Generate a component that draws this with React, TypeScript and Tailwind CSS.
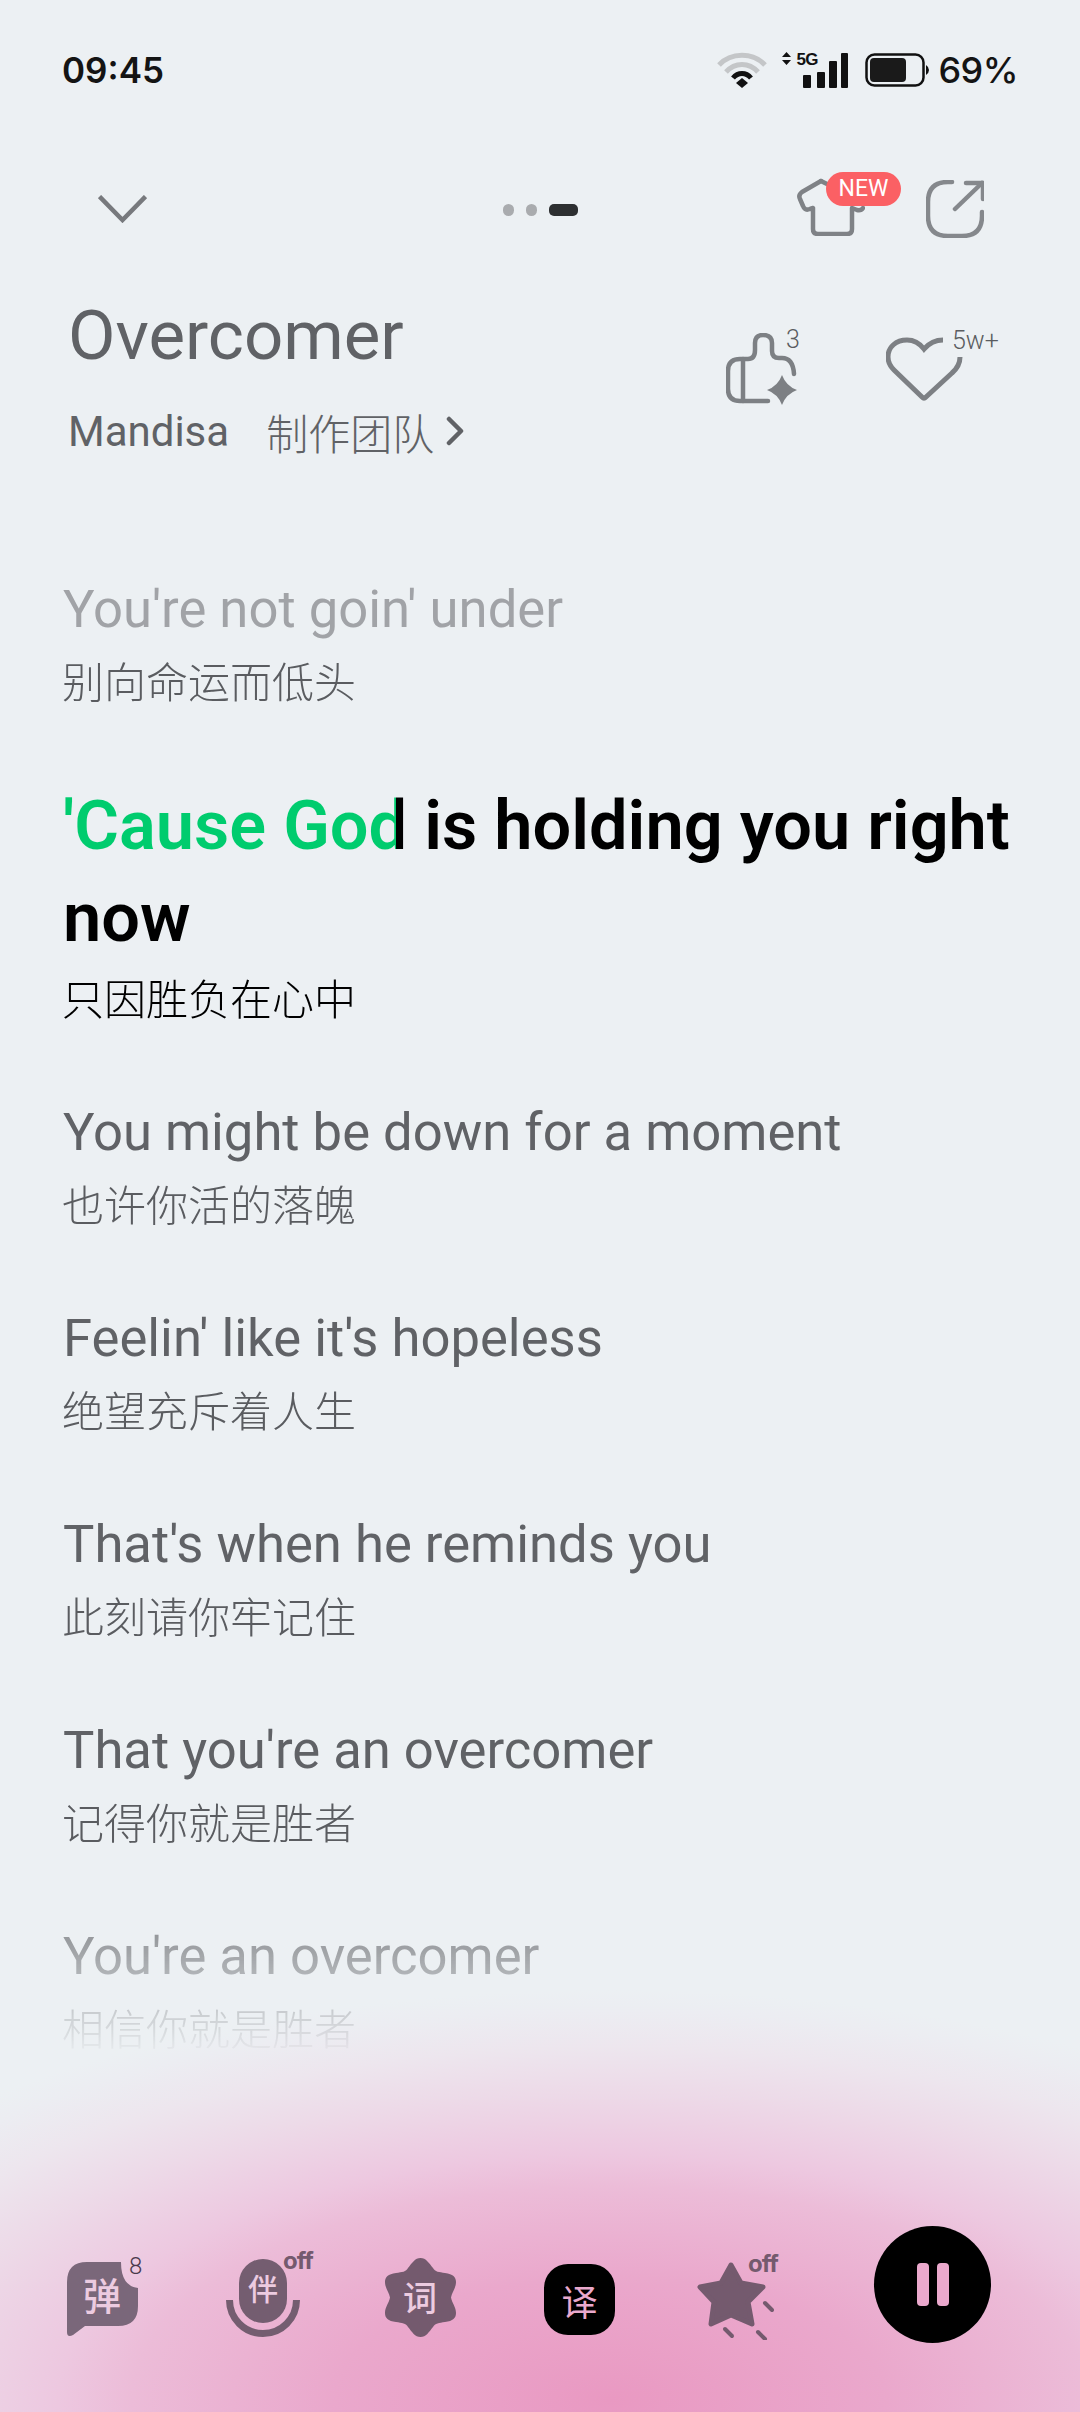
const lyrics = [
  { en: "You might be down for a moment", zh: "也许你活的落魄" },
  { en: "Feelin' like it's hopeless", zh: "绝望充斥着人生" },
  { en: "That's when he reminds you", zh: "此刻请你牢记住" },
  { en: "That you're an overcomer", zh: "记得你就是胜者" },
  { en: "You're an overcomer", zh: "相信你就是胜者" },
];

const zhFont = "font-['Noto_Sans_CJK_SC',sans-serif]";

const StatusIcons = () => (
  <div className="flex items-center">
    <svg width="50" height="36" viewBox="0 0 50 36" fill="none" strokeLinecap="butt">
      <path d="M2 13 C14 0 36 0 48 13" stroke="#c4c6c8" strokeWidth="5" />
      <path d="M9 20 C18 10 32 10 41 20" stroke="#c4c6c8" strokeWidth="5" />
      <path d="M16 26 C21 20 29 20 34 26" stroke="#111" strokeWidth="5" />
      <path d="M25 26 L31 31 L25 36 L19 31 Z" fill="#111" />
    </svg>
    <div className="relative ml-[15px] h-[36px] w-[67px]">
      <svg width="67" height="36" viewBox="0 0 67 36">
        <path d="M4.500 0 L9 5 H0 Z M4.500 13 L9 8 H0 Z" fill="#111" />
        <rect x="21" y="23" width="8" height="13" rx="1" fill="#111" />
        <rect x="35" y="20" width="8" height="16" rx="1" fill="#111" />
        <rect x="47" y="9" width="8" height="27" rx="1" fill="#111" />
        <rect x="59" y="1" width="7" height="35" rx="1" fill="#111" />
      </svg>
      <span className="absolute top-[-1px] left-[14px] font-['Liberation_Sans',sans-serif] text-[17px] leading-[17px] font-bold tracking-[-0.5px] text-[#111]">5G</span>
    </div>
    <svg className="ml-[16px]" width="64" height="34" viewBox="0 0 64 34">
      <rect x="1.500" y="1.500" width="57" height="31" rx="8" fill="none" stroke="#111" strokeWidth="2.500" />
      <rect x="5" y="5" width="36" height="24" rx="4" fill="#1a1a1a" />
      <path d="M61 12 Q64 14 64 17 Q64 20 61 22 Z" fill="#111" />
    </svg>
    <span className="ml-[9px] font-['Inter',sans-serif] text-[36px] leading-[36px] font-medium tracking-[-0.5px] text-[#141414]">69%</span>
  </div>
);

const ShirtIcon = () => (
  <svg width="68" height="58" viewBox="0 0 68 58" fill="none" stroke="#7f8286" strokeWidth="4.500" strokeLinejoin="round" strokeLinecap="round">
    <path d="M24 3 L5 14 Q1 17 3 21 L6 28 Q8 33 13 31 L16 30 V51 Q16 56 21 56 H50 Q55 56 55 51 V30 L60 32 Q64 33 66 30" />
    <path d="M24 3 L30 6" />
  </svg>
);

const ShareIcon = () => (
  <svg width="58" height="58" viewBox="0 0 58 58" fill="none" stroke="#85888c" strokeWidth="4.500" strokeLinecap="round">
    <path d="M26 2 H22 Q2 2 2 22 V36 Q2 56 22 56 H36 Q56 56 56 36 V32" />
    <path d="M29 29 L56 3" />
    <path d="M40 3 H57 V19" />
  </svg>
);

const ThumbIcon = () => (
  <svg width="72" height="72" viewBox="0 0 72 72" fill="none" stroke="#7d8084" strokeWidth="4.500" strokeLinecap="round">
    <path d="M42 68 H14 Q2 68 2 56 V38 Q2 26 14 26 H22 Q29 26 29 17 V10 Q29 2 37 2 Q46 2 46 10 V18 Q46 25 53 25 H56 Q67 25 68 41" />
    <path d="M17 26 V68" />
    <path d="M56 42 Q60 53 71 57 Q60 61 56 72 Q52 61 41 57 Q52 53 56 42 Z" fill="#7d8084" stroke="none" />
  </svg>
);

const HeartIcon = () => (
  <svg width="78" height="66" viewBox="0 0 78 66" fill="none" stroke="#7d8084" strokeWidth="5" strokeLinecap="butt">
    <path d="M57 3 Q46 3 38 12 Q31 3 21 3 C10 3 2 10 2 20 C2 26 5 30 8 33 L36 60 Q38 62 40 60 L66 36 Q74 29 74 20" />
  </svg>
);

const Glyph = ({ children, className }: { children: string; className: string }) => (
  <span className={`absolute flex items-center justify-center font-medium ${zhFont} ${className}`}>{children}</span>
);

const OffTag = ({ className }: { className: string }) => (
  <span className={`absolute font-['Inter',sans-serif] text-[24px] leading-[20px] font-bold tracking-[-1px] text-[#745a6e] ${className}`}>off</span>
);

const Toolbar = () => (
  <div className="flex h-[186px] items-start pl-[67px]">
    <div className="relative mt-[36px] h-[75px] w-[71px]">
      <svg width="71" height="75" viewBox="0 0 71 75">
        <path d="M0 20 Q0 0 20 0 H54 Q54 24 71 26 V44 Q71 64 51 64 H18 L6 73 Q0 76 0 70 Z" fill="#7a677a" />
      </svg>
      <Glyph className="top-[11px] left-[15px] h-[40px] w-[40px] text-[38px] text-[#eccbe0]">弹</Glyph>
      <span className="absolute top-[-6px] left-[62px] font-['Roboto',sans-serif] text-[24px] leading-[20px] font-light text-[#4a3a4c]">8</span>
    </div>
    <div className="relative mt-[33px] ml-[88px] h-[78px] w-[74px]">
      <svg width="74" height="78" viewBox="0 0 74 78" fill="none">
        <rect x="13" y="0" width="48" height="64" rx="24" fill="#745d70" />
        <path d="M3.500 41 A33.500 33.500 0 0 0 70.500 41" stroke="#745d70" strokeWidth="7" />
      </svg>
      <Glyph className="top-[11px] left-[20px] h-[34px] w-[34px] text-[30px] text-[#eccbe0]">伴</Glyph>
      <OffTag className="top-[-8px] left-[57px]" />
    </div>
    <div className="relative mt-[32px] ml-[85px] h-[79px] w-[71px]">
      <svg width="71" height="79" viewBox="0 0 71 79">
        <path d="M35.500 0 C41 0 44 5 48 10 C50 14 54 14 60 15 C68 16 71 19 71 24 C71 30 67 34 66 39.500 C67 45 71 49 71 55 C71 60 68 63 60 64 C54 65 50 65 48 69 C44 74 41 79 35.500 79 C30 79 27 74 23 69 C21 65 17 65 11 64 C3 63 0 60 0 55 C0 49 4 45 5 39.500 C4 34 0 30 0 24 C0 19 3 16 11 15 C17 14 21 14 23 10 C27 5 30 0 35.500 0 Z" fill="#745a6e" />
      </svg>
      <Glyph className="top-[20px] left-[17px] h-[36px] w-[36px] text-[34px] text-[#eccbe0]">词</Glyph>
    </div>
    <div className={`mt-[38px] ml-[88px] flex h-[71px] w-[71px] items-center justify-center rounded-[24px] bg-black ${zhFont} text-[36px] text-[#eaa9cd]`}>译</div>
    <div className="relative mt-[36px] ml-[82px] h-[78px] w-[77px]">
      <svg width="77" height="78" viewBox="0 0 77 78" fill="#745a6e" stroke="#745a6e">
        <polygon points="34,3 44,21 66,25 51,40 55,62 34,53 14,62 17,40 3,25 24,21" strokeWidth="5" strokeLinejoin="round" />
        <g fill="none" strokeWidth="4" strokeLinecap="round">
          <path d="M68 41 L75 48" />
          <path d="M28 67 L35 74" />
          <path d="M61 70 L68 77" />
        </g>
      </svg>
      <OffTag className="top-[-8px] left-[51px]" />
    </div>
    <div className="ml-[100px] flex h-[117px] w-[117px] items-center justify-center gap-[8px] rounded-full bg-black">
      <span className="h-[43px] w-[12px] rounded-[4px] bg-[#eba9cd]" />
      <span className="h-[43px] w-[12px] rounded-[4px] bg-[#eba9cd]" />
    </div>
  </div>
);

export default function App() {
  return (
    <div className="flex h-[2412px] w-[1080px] flex-col overflow-hidden bg-[#ecf0f3] bg-[radial-gradient(ellipse_920px_410px_at_610px_2400px,#e999c2_0%,#eaa8cc_30%,#ecbcd8_52%,#edc8e0_60%,#eddae8_75%,#ede6ee_86%,#ecedf2_95%,#ecf0f3_100%)]">
      {/* status bar */}
      <div className="mt-[52px] flex h-[36px] items-center justify-between pr-[62px] pl-[62px]">
        <span className="font-['Inter',sans-serif] text-[35px] leading-[36px] font-semibold text-[#141414]">09:45</span>
        <StatusIcons />
      </div>

      {/* nav */}
      <div className="mt-[84px] flex h-[66px] items-center pl-[98px]">
        <svg className="mt-[8px]" width="49" height="28" viewBox="0 0 49 28" fill="none" stroke="#77797d" strokeWidth="4.500">
          <path d="M1.500 1.500 L24.500 25 L47.500 1.500" />
        </svg>
        <div className="mt-[10px] ml-[356px] flex items-center gap-[12px]">
          <span className="h-[12px] w-[11px] rounded-full bg-[#a9abae]" />
          <span className="h-[12px] w-[11px] rounded-full bg-[#a9abae]" />
          <span className="h-[12px] w-[29px] rounded-[5px] bg-[#2d2f31]" />
        </div>
        <div className="relative mt-[4px] ml-[219px]">
          <ShirtIcon />
          <span className="absolute top-[-6px] left-[29px] flex h-[34px] w-[75px] items-center justify-center rounded-full bg-[#fb6064] font-['Roboto',sans-serif] text-[23px] text-white">NEW</span>
        </div>
        <div className="mt-[8px] ml-[61px]">
          <ShareIcon />
        </div>
      </div>

      {/* song head */}
      <div className="mt-[58px] flex pl-[68px]">
        <div className="w-[658px] text-[#606266]">
          <h1 className="font-['Roboto',sans-serif] text-[69px] leading-[80px] font-normal">Overcomer</h1>
          <div className="mt-[27px] flex h-[56px] items-center text-[42px]">
            <span className="font-['Roboto',sans-serif]">Mandisa</span>
            <span className={`ml-[37px] ${zhFont} font-light`}>制作团队</span>
            <svg className="ml-[11px]" width="20" height="30" viewBox="0 0 20 30" fill="none" stroke="#606266" strokeWidth="4.500" strokeLinecap="round" strokeLinejoin="round">
              <path d="M4 3 L16 15 L4 27" />
            </svg>
          </div>
        </div>
        <div className="relative mt-[37px] h-[72px] w-[72px]">
          <ThumbIcon />
          <span className="absolute top-[-8px] left-[60px] font-['Roboto',sans-serif] text-[25px] leading-[30px] font-light text-[#5a5c60]">3</span>
        </div>
        <div className="relative mt-[41px] ml-[88px] h-[66px] w-[78px]">
          <HeartIcon />
          <span className="absolute top-[-11px] left-[66px] font-['Roboto',sans-serif] text-[25px] leading-[30px] font-light whitespace-nowrap text-[#5a5c60]">5w+</span>
        </div>
      </div>

      {/* lyrics */}
      <div className="flex-1 overflow-hidden pt-[113px] pr-[10px] pl-[63px] [mask-image:linear-gradient(#000_1400px,transparent_1600px)]">
        <p className="font-['Roboto',sans-serif] text-[52.6px] leading-[74px] text-[#a1a3a7]">You're not goin' under</p>
        <p className={`-mt-[3px] -ml-[1px] ${zhFont} text-[42px] leading-[74px] font-light text-[#5a5c60]`}>别向命运而低头</p>

        <div className="mt-[63px]">
          <p className="font-['Roboto',sans-serif] text-[68.5px] leading-[92px] font-semibold text-black">
            <span className="bg-[linear-gradient(90deg,#00cc6e_333px,#000_333px)] bg-clip-text text-transparent">'Cause God</span> is holding you right now
          </p>
          <p className={`-mt-[4px] -ml-[1px] ${zhFont} text-[42px] leading-[74px] font-light text-black`}>只因胜负在心中</p>
        </div>

        {lyrics.map((line) => (
          <div key={line.en} className="mt-[61px]">
            <p className="font-['Roboto',sans-serif] text-[52.6px] leading-[74px] text-[#606266]">{line.en}</p>
            <p className={`-mt-[3px] -ml-[1px] ${zhFont} text-[42px] leading-[74px] font-light text-[#5a5c60]`}>{line.zh}</p>
          </div>
        ))}
      </div>

      <Toolbar />
    </div>
  );
}
